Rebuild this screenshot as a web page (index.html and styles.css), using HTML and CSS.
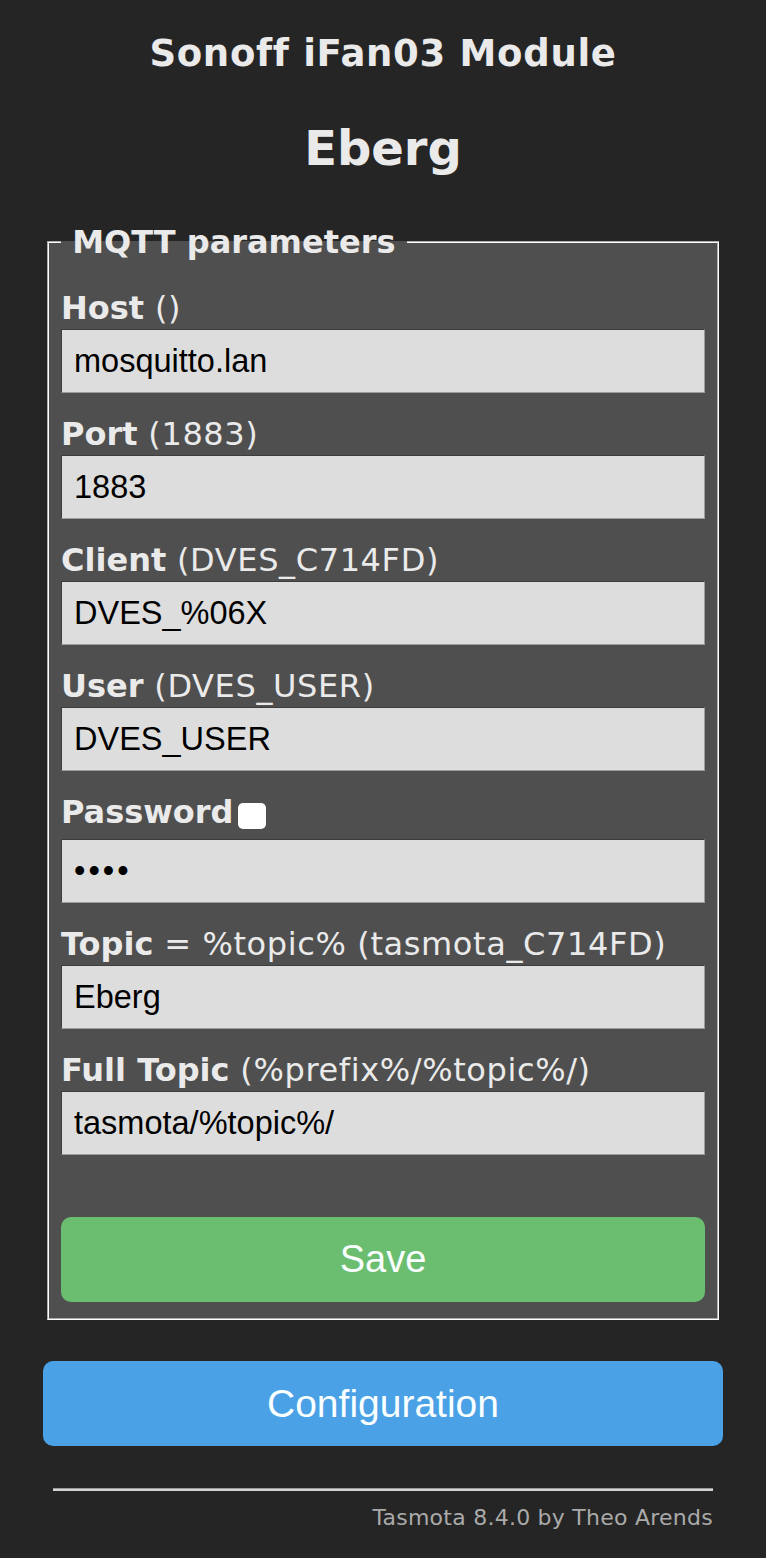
FILE: index.html
```html
<!DOCTYPE html>
<html lang="en">
<head>
<meta charset="utf-8">
<title>Eberg - MQTT</title>
<link rel="stylesheet" href="styles.css">
</head>
<body>
<div class="page">
  <h3 class="title">Sonoff iFan03 Module</h3>
  <h2 class="name">Eberg</h2>
  <fieldset class="box">
    <legend class="legend"><b>&nbsp;MQTT parameters&nbsp;</b></legend>
    <form class="form">
      <div class="field">
        <div class="lbl"><b>Host</b> ()</div>
        <input class="txt" value="mosquitto.lan">
      </div>
      <div class="field">
        <div class="lbl"><b>Port</b> (1883)</div>
        <input class="txt" value="1883">
      </div>
      <div class="field">
        <div class="lbl"><b>Client</b> (DVES_C714FD)</div>
        <input class="txt" value="DVES_%06X">
      </div>
      <div class="field">
        <div class="lbl"><b>User</b> (DVES_USER)</div>
        <input class="txt" value="DVES_USER">
      </div>
      <div class="field">
        <div class="lbl lbl-pw"><b>Password</b><input class="chk" type="checkbox"></div>
        <input class="txt pw" type="password" value="****">
      </div>
      <div class="field">
        <div class="lbl"><b>Topic</b> = %topic% (tasmota_C714FD)</div>
        <input class="txt" value="Eberg">
      </div>
      <div class="field">
        <div class="lbl"><b>Full Topic</b> (%prefix%/%topic%/)</div>
        <input class="txt" value="tasmota/%topic%/">
      </div>
      <button class="btn btn-save" type="button">Save</button>
    </form>
  </fieldset>
  <button class="btn btn-config" type="button">Configuration</button>
  <div class="footer">
    <div class="rule"></div>
    <div class="credit">Tasmota 8.4.0 by Theo Arends</div>
  </div>
</div>
</body>
</html>
```

FILE: styles.css
```css
html, body {
  margin: 0;
  padding: 0;
}
body {
  background: #252525;
  color: #eaeaea;
  font-family: "DejaVu Sans", Verdana, sans-serif;
  font-size: 32px;
}
.page {
  width: 680px;
  margin: 0 auto;
  padding-top: 32px;
  padding-bottom: 20px;
}
.title {
  margin: 0;
  font-size: 37px;
  line-height: 44px;
  font-weight: bold;
  text-align: center;
  letter-spacing: 0.7px;
}
.name {
  margin: 44px 0 0;
  font-size: 48px;
  line-height: 56px;
  font-weight: bold;
  text-align: center;
}
.box {
  margin: 47px 4px 0;
  padding: 28px 12px 16px;
  background: #4f4f4f;
  border: 2px groove #ffffff;
  min-width: 0;
}
.legend {
  padding: 0;
  margin: 0;
  line-height: 38px;
  font-size: 32px;
}
.form {
  margin: 0;
  display: flex;
  flex-direction: column;
}
.field + .field {
  margin-top: 22px;
}
.lbl {
  height: 38px;
  line-height: 38px;
  margin-bottom: 2px;
  white-space: nowrap;
  letter-spacing: 0.62px;
}
.lbl b {
  letter-spacing: 0;
}
.lbl-pw {
  margin-bottom: 8px;
}
.chk {
  appearance: none;
  -webkit-appearance: none;
  width: 28px;
  height: 26px;
  margin: 0 0 0 4px;
  padding: 0;
  background: #ffffff;
  border: 0;
  border-radius: 5px;
  vertical-align: -6px;
}
.txt {
  display: block;
  box-sizing: border-box;
  width: 100%;
  height: 64px;
  margin: 0;
  padding: 0 12px;
  background: #dddddd;
  color: #000000;
  font-family: "Liberation Sans", Arial, sans-serif;
  font-size: 32.5px;
  border: 1px solid;
  border-color: #3c3c3c #9c9c9c #9c9c9c #3c3c3c;
  border-radius: 0;
  outline: none;
}
.pw {
  letter-spacing: 3px;
}
.btn {
  display: block;
  width: 100%;
  height: 85px;
  padding: 0;
  border: 0;
  border-radius: 10px;
  color: #faffff;
  font-family: "Liberation Sans", Arial, sans-serif;
  font-size: 38px;
  line-height: 85px;
  text-align: center;
}
.btn-save {
  margin-top: 62px;
  background: #6bbe70;
}
.btn-config {
  margin-top: 41px;
  background: #4ba1e6;
  font-size: 39px;
}
.footer {
  padding: 0 10px;
  margin-top: 42px;
}
.rule {
  height: 0;
  border-top: 1px solid #9a9a9a;
  border-bottom: 2px solid #d4d4d4;
}
.credit {
  margin-top: 14px;
  text-align: right;
  font-size: 22px;
  line-height: 26px;
  color: #aaaaaa;
  letter-spacing: 0.25px;
}
```
